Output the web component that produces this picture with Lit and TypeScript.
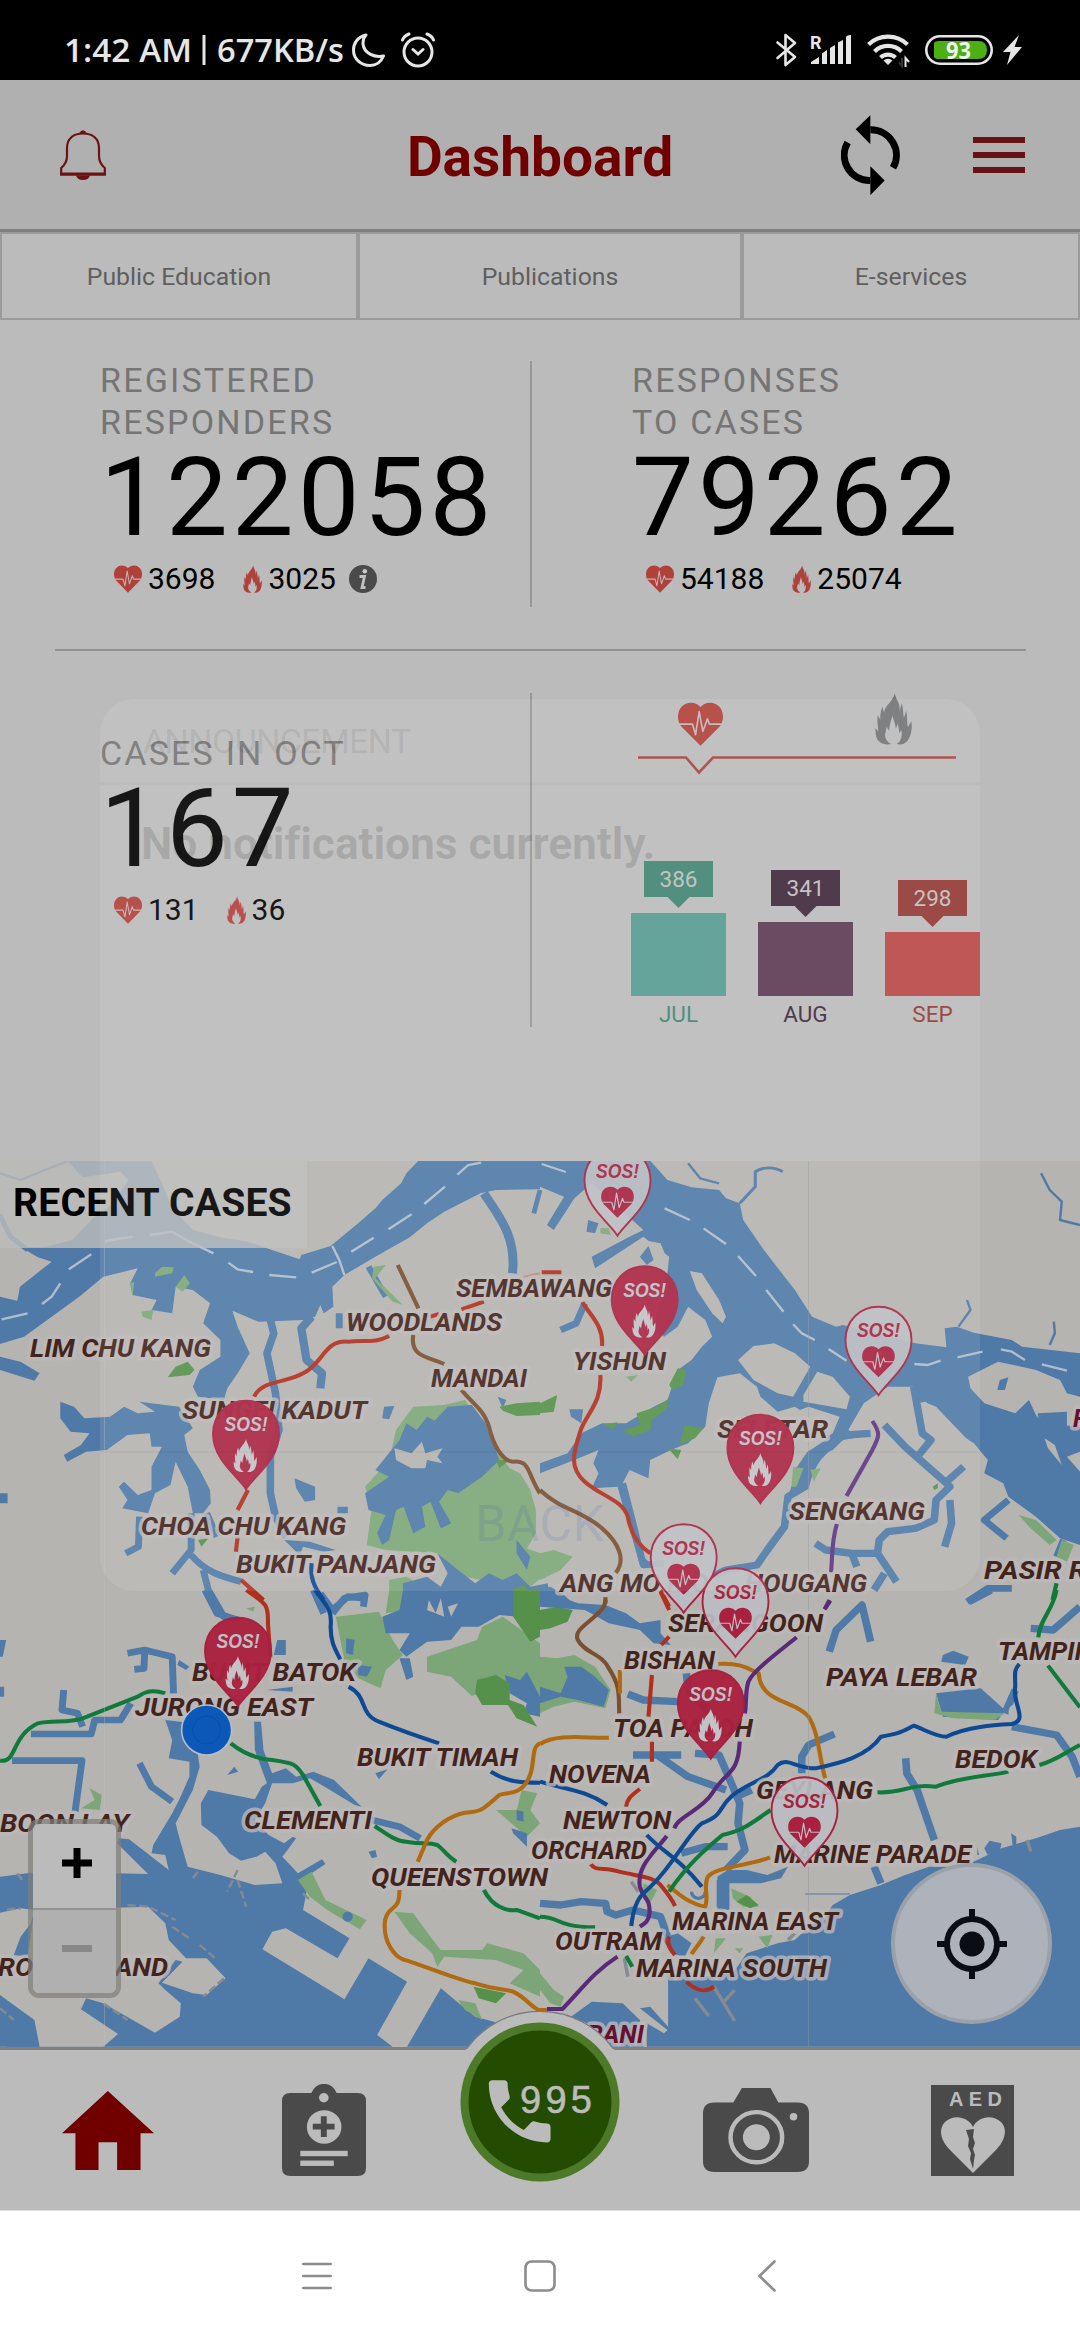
import { LitElement, html, svg, css } from "lit";
import { customElement } from "lit/decorators.js";

/* ---------- shared icon shapes ---------- */

const heartShape = (line: string) => svg`
  <path d="M272 197 L214 139 C200 122 201 93 215 79 C231 62 258 64 272 80 C286 64 313 62 329 79 C343 93 344 122 330 139Z"></path>
  <path d="M202 132 H248 L257 164 L268 94 L279 154 L293 116 L299 132 H342" fill="none" stroke=${line} stroke-width="5" stroke-linejoin="round"></path>`;

const flameShape = svg`
  <path d="M855 40 C857 60 872 66 869 96 L875 70 C880 86 880 104 882 114 L889 92 C893 112 890 126 894 142 L904 124 C908 150 901 174 891 184 C882 194 870 195 860 192 C872 185 879 170 874 150 L868 160 C868 145 864 138 864 130 L858 146 C856 125 850 120 848 106 C843 125 839 135 838 152 L830 140 C830 155 823 160 827 173 C830 182 836 188 844 192 C825 196 812 190 804 180 C797 168 798 155 797 145 L806 154 C803 130 803 122 804 106 L812 120 C811 105 813 93 818 80 L823 98 C826 76 850 64 855 40Z"></path>`;

const heartIcon = (w: number, h: number) => html`
  <svg class="red" width=${w} height=${h} viewBox="204 65 136 133" preserveAspectRatio="none">${heartShape("#c3b4b3")}</svg>`;
const flameIcon = (w: number, h: number, cls = "red") => html`
  <svg class=${cls} width=${w} height=${h} viewBox="796 39 110 156" preserveAspectRatio="none">${flameShape}</svg>`;

/* ---------- map data ---------- */

const WATER = "#4f7aa8";
const LAND = "#b6b4b0";
const GREEN = "#7da678";
const FOREST = "#55914a";

type Place = [string, number, number, number, string?];
const places: Place[] = [
  ["LIM CHU KANG", 30, 211, 1357], ["SEMBAWANG", 456, 612, 1297], ["WOODLANDS", 346, 502, 1331],
  ["MANDAI", 431, 527, 1387], ["SUNGEI KADUT", 182, 367, 1419], ["CHOA CHU KANG", 141, 346, 1535],
  ["BUKIT PANJANG", 236, 436, 1573], ["YISHUN", 573, 666, 1370], ["SELETAR", 717, 828, 1438],
  ["SENGKANG", 789, 925, 1520], ["ANG MO KIO", 560, 709, 1592], ["HOUGANG", 745, 867, 1592],
  ["PASIR RIS", 984, 1112, 1579], ["BUKIT BATOK", 192, 356, 1681], ["JURONG EAST", 135, 313, 1716],
  ["BUKIT TIMAH", 357, 518, 1766], ["CLEMENTI", 244, 372, 1829], ["BOON LAY", 0, 129, 1832],
  ["QUEENSTOWN", 371, 548, 1886], ["JURONG ISLAND", -34, 168, 1976], ["SERANGOON", 668, 823, 1632],
  ["BISHAN", 624, 715, 1669], ["PAYA LEBAR", 826, 977, 1686], ["TAMPINES", 998, 1122, 1660],
  ["TOA PAYOH", 613, 753, 1737], ["NOVENA", 549, 651, 1783], ["GEYLANG", 756, 873, 1799],
  ["BEDOK", 955, 1037, 1768], ["NEWTON", 563, 671, 1829], ["ORCHARD", 531, 647, 1859],
  ["MARINE PARADE", 774, 971, 1863], ["MARINA EAST", 672, 838, 1930], ["OUTRAM", 555, 662, 1950],
  ["MARINA SOUTH", 636, 827, 1977], ["BRANI", 571, 644, 2043, "#65102f"], ["PULAU", 1073, 1150, 1427, "#65102f"],
];

type Pin = ["fire" | "heart", number, number];
const pins: Pin[] = [
  ["heart", 617.5, 1236.5], ["fire", 644.7, 1355.5], ["heart", 878.5, 1396], ["fire", 246, 1490],
  ["fire", 760.4, 1504], ["heart", 683.7, 1613.5], ["heart", 735.5, 1657.5], ["fire", 238, 1707],
  ["fire", 710.8, 1759.5], ["heart", 804.5, 1866.5],
];

const pin = ([kind, x, y]: Pin) => {
  const fire = kind === "fire";
  return svg`
    <g transform="translate(${x} ${y})">
      <path d="M0 -0.8 C-8 -14 -33 -30 -33 -56 C-33 -75 -19 -89.2 0 -89.2 C19 -89.2 33 -75 33 -56 C33 -30 8 -14 0 -0.8Z"
        fill=${fire ? "#a9213f" : "#bbbcc2"} fill-opacity=${fire ? 0.97 : 0.93} stroke="#a9213f" stroke-width="1.9"></path>
      <text x="0" y="-59" text-anchor="middle" class="sos" textLength="43" lengthAdjust="spacingAndGlyphs" fill=${fire ? "#bfbfc4" : "#a9213f"}>SOS!</text>
      ${fire
        ? svg`<g fill="#c3c3c6" transform="translate(-0.8 -34.5) scale(.215) translate(-851 -117)">${flameShape}</g>`
        : svg`<g fill="#a9213f" transform="translate(0 -34.5) scale(.24) translate(-272 -131)">${heartShape("#bbbcc2")}</g>`}
    </g>`;
};

/* Each quadrant of the map is drawn in its own 1568-wide tile grid. */
const northWest = svg`
  <g transform="translate(0 1140) scale(.34439 .33333)">
    <g fill=${WATER}>
      <path d="M0 470 L50 482 58 440 150 365 110 352 60 322 130 322 210 300 270 235 330 190 372 120 350 95 240 112 195 62 H440 L470 130 500 205 560 270 640 292 720 305 790 330 870 358 875 345 960 318 1040 250 1090 205 1110 180 1165 130 1180 100 1215 62 H1568 V148 L1440 150 1395 160 1290 215 1240 250 1190 292 1090 350 1000 405 965 440 968 500 940 520 930 495 915 530 880 540 750 545 675 512 690 560 725 640 690 700 660 745 650 780 575 770 560 740 580 690 640 650 640 600 590 550 610 490 560 450 510 440 500 520 440 510 455 480 385 465 378 430 400 385 300 410 230 470 150 530 70 590 0 612Z"></path>
      <path d="M0 650 L60 665 115 700 100 722 0 690Z"></path>
      <path d="M175 785 L215 800 245 835 320 830 360 800 400 820 450 815 405 785 520 800 560 865 535 885 545 935 580 990 610 1050 612 1090 590 1120 560 1120 545 1040 510 965 495 1035 450 1060 430 1120 355 1105 370 1080 345 1040 360 1025 400 1065 440 1050 440 980 470 920 440 920 435 880 370 885 310 930 250 935 195 965 185 945 235 915 260 880 205 875 175 835Z"></path>
      <path d="M855 1015 L915 1040 915 1080 885 1085 860 1045Z M1115 800 L1145 798 1130 838 1110 835Z M975 520 h20 v45 h-20Z M1445 770 l25 10 l-10 25z M0 1060 h22 v30 h-22z"></path>
      <path d="M825 1200 L900 1205 975 1230 940 1235 880 1220 870 1245Z"></path>
    </g>
    <g fill="none" stroke=${WATER} stroke-width="20" stroke-linejoin="round">
      <path d="M0 225 L30 290 80 330" stroke-width="14"></path>
      <path d="M785 540 L795 580 775 640 800 760 810 870 785 950 785 1060 800 1130 830 1190" stroke-width="22"></path>
      <path d="M905 530 L875 565 890 660 935 700 930 745" stroke-width="24"></path>
      <path d="M1070 380 L1120 470" stroke-width="18"></path>
      <path d="M1405 160 C1450 230 1500 290 1488 400" stroke-width="26"></path>
      <path d="M405 1130 L402 1220 365 1240 M555 1120 L555 1230 500 1300 M555 1245 C600 1300 650 1310 700 1325 M590 1290 L605 1350 650 1430 690 1440"></path>
      <path d="M600 1120 L630 1190 M980 1110 L1010 1110 M930 1360 L965 1410 L1010 1370 L1060 1375"></path>
      <path d="M1568 150 L1550 220" stroke-width="14"></path>
    </g>
    <path d="M0 100 L60 120 130 90 195 64" fill="none" stroke=${WATER} stroke-width="7"></path>
    <g fill=${GREEN}>
      <path d="M450 400 L470 380 505 382 500 400 450 410Z M510 440 L535 405 552 430 530 455Z M410 515 L445 510 440 540 415 530Z M378 430 L390 425 385 470Z"></path>
      <path d="M1200 800 L1290 795 1350 780 1390 840 1440 930 1480 985 1510 1000 1540 1050 1556 1110 1556 1180 1530 1225 1568 1240 1590 1300 1540 1340 1440 1330 1350 1310 1270 1240 1120 1230 1065 1215 1080 1100 1060 1040 1130 960 1150 870Z"></path>
      <path d="M1130 1320 L1180 1310 1250 1350 1250 1380 1130 1380Z M1085 380 l35 -5 -30 40 80 80 -30 -10 -60 -70z"></path>
    </g>
    <g fill=${WATER}>
      <path d="M1180 850 L1210 870 1240 830 1262 842 1300 800 1370 795 1410 850 1450 960 1400 1010 1330 1060 1300 1050 1275 1085 1310 1150 1280 1165 1250 1085 1225 1100 1235 1160 1200 1180 1172 1100 1150 1110 1130 1200 1110 1215 1095 1180 1120 1125 1070 1110 1060 1060 1130 1010 1090 990 1160 900Z"></path>
      <path d="M1170 1330 L1240 1310 1280 1340 1300 1300 1270 1240 1330 1290 1380 1330 1420 1300 1460 1320 1500 1300 1540 1340 1590 1330 1600 1380 1170 1380Z M1500 1200 L1540 1250 1530 1290 1500 1240Z"></path>
    </g>
    <g fill=${LAND}>
      <path d="M1145 925 L1195 940 1225 905 1235 940 1285 925 1270 950 1285 970 1240 960 1235 985 1195 985 1150 960Z"></path>
    </g>
    <g fill=${FOREST}>
      <path d="M487 712 L510 680 545 665 565 690 550 705Z M575 1200 l30 -5 -20 25z M1450 800 L1500 790 1568 785 V825 L1500 828 1460 812Z M1440 960 L1480 960 1450 985Z M1485 1350 L1520 1335 1568 1380 H1485Z"></path>
    </g>
    <g fill="none" stroke="#aebccb" stroke-width="7">
      <path d="M5 538 L80 520 M122 492 L150 470 175 430 M200 388 L265 343 M305 303 L385 290 M435 285 L500 275 550 305 620 340 M663 368 L690 388 735 396 M782 405 L860 412 M905 398 L978 366 M1020 335 L1085 293 M1128 268 L1195 223 M1232 192 L1292 140 M1328 104 L1360 75 1397 68 M965 318 L985 360 1000 405"></path>
    </g>
    <g fill="none" stroke-width="12" stroke-linejoin="round">
      <path d="M738 770 C760 720 830 730 880 700 C940 670 940 600 1010 605 C1060 600 1090 610 1130 588 M1250 530 L1275 522 M1340 508 L1405 485" stroke="#b03020"></path>
      <path d="M720 1050 L690 1110 M690 1190 L685 1235 M700 1320 L765 1380" stroke="#b03020"></path>
      <path d="M1520 410 L1568 400" stroke="#c08a85" stroke-width="6"></path>
      <path d="M1155 375 L1215 505 M1200 585 C1190 650 1240 650 1290 672 M1340 750 C1380 800 1410 810 1425 880 C1440 930 1465 965 1490 965 C1540 960 1530 1000 1568 1060" stroke="#7a5030"></path>
      <path d="M905 1270 C900 1310 910 1340 940 1380" stroke="#0e4a94"></path>
    </g>
  </g>`;

const northEast = svg`
  <g transform="translate(540 1140) scale(.34439 .33333)">
    <g fill=${WATER}>
      <path d="M0 62 H320 L370 120 440 142 520 150 540 175 580 190 590 240 650 330 740 450 790 530 860 560 880 555 1090 610 1180 622 1175 565 1210 560 1260 578 1370 600 1400 620 1568 640 V1215 L1510 1195 1440 1130 1360 1070 1345 1030 1290 1000 1300 960 1260 910 1200 870 1120 785 1095 790 1085 740 1010 740 940 790 895 870 935 890 880 900 850 930 800 950 770 1040 720 1070 740 1010 740 960 830 900 860 850 840 830 770 820 740 800 690 815 640 770 630 740 580 700 515 712 490 790 480 860 430 910 380 930 320 960 315 1015 260 990 240 1030 290 1240 320 1270 290 1275 225 1040 150 1045 170 1000 155 970 170 930 100 960 0 1000 V970 L80 940 120 880 180 850 250 850 330 800 370 780 400 690 440 660 470 620 500 590 480 540 430 500 400 560 360 590 330 560 370 400 375 350 300 290 160 385 150 350 260 290 300 270 150 130 100 175 40 270 20 255 70 170 0 140Z"></path>
      <path d="M85 808 L125 808 120 850 90 830Z M140 240 l30 10 -10 30 -25 -5z M0 1350 L30 1340 70 1365 90 1385 H0Z"></path>
    </g>
    <g fill=${LAND}>
      <path d="M575 660 L620 618 680 610 740 640 785 680 735 770 690 760 620 720Z"></path>
      <path d="M805 695 L850 710 900 770 890 808 765 785 765 765Z"></path>
      <path d="M435 393 L470 400 520 480 540 530 530 550 500 520 455 450Z"></path>
      <path d="M1115 785 L1150 800 1270 930 1300 960 1295 975 1220 930 1150 870Z"></path>
      <path d="M1120 905 L1165 930 1155 965 1105 945Z M1180 950 L1225 985 1195 1015 1165 990Z"></path>
      <path d="M1243 710 L1330 665 1440 690 1510 720 1530 760 1568 770 V860 L1460 850 1440 825 1420 780 1380 820 1290 790 1250 745Z"></path>
      <path d="M370 360 L350 310 300 300 330 330 345 375Z M1465 895 l30 20 20 60 -40 -50z M1530 950 l38 -15 v60z"></path>
      <path d="M700 830 L780 800 870 830 850 880 780 930 740 990 720 1060 600 1200 450 1200 320 1010 330 960 430 920 490 850Z"></path>
    </g>
    <path d="M1335 720 L1360 712 1350 750 1328 750Z M1445 820 L1530 815 1530 860 1450 850Z M290 350 L315 318 330 360 310 375Z" fill=${WATER}></path>
    <g fill="none" stroke=${WATER} stroke-width="20" stroke-linejoin="round">
      <path d="M580 190 L625 140 625 95 C650 80 680 80 705 95" stroke-width="9"></path>
      <path d="M1455 100 L1480 150 1515 185 1510 240 1568 255 M1215 560 L1250 510 1240 480 M1480 615 L1495 580 1492 545 M430 70 L465 115 520 130" stroke-width="7"></path>
      <path d="M130 490 L105 550 60 570"></path>
      <path d="M860 900 C830 930 790 950 770 1040 L720 1070 710 1160 660 1230 630 1275 540 1290 500 1310" stroke-width="22"></path>
      <path d="M890 885 L960 880 M1000 855 L1060 920 1170 1020 1190 1040 1150 1080 1145 1140 1090 1165 1010 1175 985 1200 980 1240 905 1240 830 1230 800 1210 M1085 740 L1110 880 1135 900 1100 945 M1230 980 L1170 1035 M1190 1080 L1195 1150 1175 1220 M905 1240 L920 1280 M980 1240 L1035 1325 M1000 1300 L970 1350" stroke-width="22"></path>
      <path d="M1360 1080 L1290 1140 1355 1195 M1520 1200 L1500 1250 M1240 1385 L1300 1345 1370 1345" stroke-width="20"></path>
      <path d="M240 1030 L270 1150 300 1275 360 1270"></path>
    </g>
    <g fill=${GREEN}>
      <path d="M1390 1125 L1440 1140 1500 1200 1480 1215 1420 1160Z M1515 1200 L1550 1215 1530 1265 1500 1250Z M735 980 L765 985 745 1040 730 1040Z M785 990 l30 -5 -20 40z M0 1240 L40 1230 95 1250 60 1290 20 1310 0 1320Z M250 710 l35 -5 -20 20z M175 265 l25 0 5 20 -30 -5z"></path>
    </g>
    <g fill=${FOREST}>
      <path d="M400 685 L425 690 415 735 385 750 375 735Z M240 870 L290 855 280 820 340 800 375 775 365 810 325 840 320 870 270 890Z M405 915 L420 855 475 865 450 895Z M372 925 L410 930 400 958Z M0 790 L50 765 40 815 0 820Z M1140 1040 l15 -10 0 15 -10 5z M180 855 l45 -8 -10 20z"></path>
    </g>
    <g fill="none" stroke="#aebccb" stroke-width="7">
      <path d="M5 72 L75 96 M362 205 L435 240 M475 265 L540 312 M575 348 L627 408 M657 450 L707 515 M735 553 L760 580 798 600 M838 627 L890 662 M1087 672 L1125 675 1163 662 M1212 652 L1285 635 M1338 628 L1370 635 1408 660 M1457 673 L1530 692"></path>
    </g>
    <g fill="none" stroke-width="12" stroke-linejoin="round">
      <path d="M5 397 L62 397 M123 487 C150 530 185 560 180 618 M175 705 C180 780 145 810 120 865 C100 930 80 980 130 1025 C180 1070 240 1080 255 1130 C265 1190 290 1220 320 1240 M350 1350 L375 1400" stroke="#b03020"></path>
      <path d="M0 1050 C60 1110 120 1110 180 1165 C230 1210 250 1260 220 1298 M190 1372 L190 1390" stroke="#7a5030"></path>
      <path d="M965 843 C990 880 985 890 965 930 L890 1068 M862 1152 C845 1210 850 1250 845 1297 M840 1380 L828 1405" stroke="#5f3580"></path>
      <path d="M1500 1330 L1488 1380" stroke="#107a3c"></path>
    </g>
  </g>`;

const southWest = svg`
  <g transform="translate(0 1590) scale(.34439 .33333)">
    <g fill=${WATER}>
      <path d="M0 860 L90 848 330 850 430 852 340 760 345 745 375 748 490 840 480 795 440 790 445 765 500 670 520 630 550 560 550 515 490 505 500 450 480 390 560 400 580 530 560 600 510 700 520 740 545 830 640 855 740 885 820 880 800 820 770 785 745 800 700 812 665 790 630 740 585 705 583 640 605 600 740 628 760 590 775 580 740 480 738 395 758 395 765 480 790 550 830 535 860 560 910 545 970 570 1050 650 1030 645 950 595 900 565 850 580 790 580 770 640 740 690 780 735 825 760 850 740 860 745 820 800 865 850 935 808 945 822 875 870 890 905 880 960 1015 1045 980 1105 830 1015 790 1025 762 1078 1000 1228 1070 1105 1182 1175 1095 1335 1140 1370 H0Z"></path>
      <path d="M1182 1370 L1280 1195 1380 1280 1450 1300 1568 1310 V1370Z"></path>
      <path d="M0 150 h18 l-10 50 h-8z M0 290 h12 v30 h-12z M805 150 h25 v45 h-35z M1005 150 h25 v45 h-30z M1045 220 l40 10 -15 30 -30 -10z M1160 205 l30 0 10 55 -20 10z M520 210 l30 20 -10 10 -25 -15z M660 555 l20 -25 12 15z M1090 550 l35 -12 -25 30z M1070 785 l20 -5 5 20 -15 5z M775 300 l75 -10 0 15z"></path>
    </g>
    <g fill="none" stroke=${WATER} stroke-width="20" stroke-linejoin="round">
      <path d="M595 0 L630 70 690 90 M370 190 L420 180 500 200 504 310 M420 190 L418 235 390 238 M185 300 L180 360 225 370 240 410 M90 432 L265 432 275 390 350 390 380 340 M35 512 H238 L218 665 M405 520 L440 590 500 635 M1080 690 L1160 710 1220 745 M965 70 L1000 25 1060 15 1055 50 M910 0 L940 70"></path>
    </g>
    <g fill=${LAND}>
      <path d="M0 968 L60 955 100 960 90 1000 60 1040 40 1095 80 1100 100 960 430 950 480 1000 490 1050 540 1105 600 1105 655 1165 600 1215 560 1210 470 1178 530 1115 510 1110 460 1180 480 1200 525 1240 522 1280 450 1328 300 1240 250 1225 235 1258 343 1332 300 1370 H115 L100 1290 0 1215Z"></path>
    </g>
    <path d="M0 1235 L60 1285 100 1320 112 1370 H20 L0 1310Z" fill=${WATER}></path>
    <g fill=${GREEN}>
      <path d="M975 80 L1100 65 1140 150 1170 195 1120 240 1105 295 1040 265 1000 210Z"></path>
      <path d="M1130 0 H1210 L1190 60 1120 70Z M1240 200 L1385 150 1400 110 1460 80 1568 160 V320 L1480 280 1370 318 1310 260 1240 245Z"></path>
      <path d="M260 595 L295 615 290 660 235 655 275 630Z M865 870 L905 845 945 930 1065 990 1045 1018 950 960 900 920Z M1145 965 L1200 970 1250 1040 1280 1080 1400 1080 1415 1060 1520 1090 1568 1140 V1220 L1480 1180 1520 1140 1440 1110 1290 1100 1270 1130 1255 1090 1190 1030Z M1515 600 L1560 610 1540 660 1568 700 1530 740 1440 660 1500 660Z M1330 1230 L1380 1240 1400 1290 1350 1260Z M715 55 l25 -5 -5 15z"></path>
    </g>
    <g fill=${WATER}>
      <path d="M1170 0 H1490 L1500 80 1450 75 1390 110 1340 110 1310 150 1240 155 1180 200 1160 180 1190 130 1120 130 1110 80 1160 60Z"></path>
      <path d="M1465 255 L1510 270 1530 245 1568 320 V380 L1520 370 1530 340 1480 310Z M1500 660 l20 5 0 30 -20 -5z M1485 715 l45 15 0 40 -40 -40z M1010 965 a15 15 0 1 1 -1 0z M1005 145 l25 5 -5 45 -20 -5z M1040 225 l40 5 -15 30 -25 -5z"></path>
    </g>
    <path d="M1245 30 L1265 70 1280 25 1290 80 1240 60Z M1300 50 l30 -10 -20 40z" fill=${LAND}></path>
    <path d="M1490 0 H1568 V140 L1540 155 1490 80Z M1385 270 L1440 255 1480 280 1480 330 1520 345 1560 410 1500 385 1475 345 1400 345 1380 310Z M1375 1190 L1470 1210 1440 1240 1390 1225Z" fill=${FOREST}></path>
    <g fill="none" stroke="#868b91" stroke-width="7" stroke-dasharray="24 10">
      <path d="M50 850 L65 870 M575 845 L555 870 M690 840 L660 905 M690 870 L715 950 M880 910 L900 930 M20 958 L60 955 M370 945 L430 950 510 990 M500 1010 L550 1045 M580 1065 L630 1110 M650 1165 L590 1220 M300 1240 L370 1290 M0 1255 L40 1290"></path>
    </g>
    <g fill="none" stroke-width="12" stroke-linejoin="round">
      <path d="M715 0 C770 40 780 40 778 100 L785 200" stroke="#b03020"></path>
      <path d="M915 0 C950 50 965 60 960 110 C960 160 975 180 988 208 M1012 290 C1070 320 1040 370 1100 395 C1160 420 1200 435 1275 460 M1425 545 C1470 575 1510 578 1568 578" stroke="#0e4a94"></path>
      <path d="M0 512 C50 520 30 440 110 400 C150 390 200 400 240 385 L400 320 C430 300 450 300 480 310 M670 460 C720 500 760 508 790 510 C860 520 860 525 880 555 L930 648 M1088 708 C1120 730 1150 755 1180 755 C1230 765 1240 755 1270 765 C1290 780 1300 800 1325 815 M1405 900 C1430 950 1470 965 1500 960 L1568 985" stroke="#107a3c"></path>
      <path d="M1568 460 C1540 470 1555 530 1535 565 C1510 620 1470 605 1450 615 C1400 660 1400 665 1350 668 C1310 675 1260 710 1240 750 L1213 815 M1160 900 C1160 970 1130 940 1118 990 C1110 1060 1150 1100 1170 1108 C1240 1130 1330 1170 1380 1180 C1440 1200 1460 1195 1490 1205 C1530 1225 1540 1250 1568 1262" stroke="#b06a10"></path>
    </g>
  </g>`;

const southEast = svg`
  <g transform="translate(540 1590) scale(.34439 .33333)">
    <g fill=${WATER}>
      <path d="M1568 710 L1510 720 1440 745 1390 760 1340 775 1270 810 1220 830 1130 830 1060 855 990 885 900 915 850 945 830 975 770 1020 740 1050 690 1060 600 1090 560 1150 440 1165 400 1130 372 1160 V1310 L320 1250 290 1255 370 1320 360 1330 310 1300 V1370 H1568Z"></path>
      <path d="M90 1280 L150 1235 240 1240 290 1290 300 1370 H150Z"></path>
      <path d="M355 1045 L400 1030 440 1060 420 1100 380 1090Z"></path>
      <path d="M1150 310 L1280 295 1350 360 1330 390 1170 380Z M1170 195 L1200 182 1245 200 1235 225 1165 215Z M1270 770 l5 25 -5 0z M1290 775 L1305 752 1340 760 1335 785 1300 795Z M1368 730 l15 10 0 30 -10 0z"></path>
      <path d="M515 860 L545 840 600 840 660 855 720 830 700 865 640 880 550 880 550 960 515 960Z"></path>
    </g>
    <g fill=${GREEN}>
      <path d="M0 200 L50 205 100 195 160 230 205 300 190 355 100 335 40 350 0 370Z M1150 310 L1145 370 1200 385 1320 390 1350 370 1165 365Z M555 895 L610 920 635 950 590 950 560 925Z M0 1150 L40 1200 70 1220 60 1250 30 1240 0 1200Z M510 1045 L540 1045 505 1090Z M635 1040 L675 1035 660 1075Z M565 1075 l25 0 -10 15z M300 880 L340 900 320 940 300 920Z"></path>
    </g>
    <path d="M0 60 L50 50 95 60 80 95 30 115 0 120Z M570 935 L600 915 635 945 610 955Z" fill=${FOREST}></path>
    <path d="M0 20 L60 20 110 40 190 45 250 70 290 100 350 90 350 130 380 165 330 160 290 120 200 100 130 60 0 50Z M0 290 L60 310 80 260 70 230 120 230 160 260 200 300 185 350 110 330 60 320 0 340Z" fill=${WATER}></path>
    <g fill="none" stroke=${WATER} stroke-width="22" stroke-linejoin="round">
      <path d="M255 312 L300 330 400 335 M425 250 L430 300 560 440 M270 495 H410 M340 495 L430 560 540 600 M450 490 L520 495 560 590 580 640 575 700 595 780 540 840 M570 620 L615 600 M545 770 L480 770 410 790 M840 185 L860 120 935 45 960 155 M855 432 L780 465 760 500 760 550 M1062 505 L1065 550 1095 600 1145 750 M970 830 L990 880 M1370 410 L1500 435 1545 500 1568 560 M1380 300 L1350 370 M1245 35 L1310 0 M1425 115 L1490 120 1568 50 M0 940 L60 945 120 935 190 940 195 965 220 975 270 960 350 980 370 1040"></path>
      <path d="M530 870 V950" stroke-width="34"></path>
      <path d="M770 912 H900" stroke-width="3"></path>
      <path d="M440 905 a18 18 0 1 0 40 0" stroke-width="10"></path>
    </g>
    <path d="M1375 345 a15 22 0 1 0 1 0z" fill=${LAND}></path>
    <g fill="none" stroke="#868b91" stroke-width="10">
      <path d="M450 1225 L490 1278 M505 1190 L565 1293 M530 1240 L565 1200 M265 875 L285 905 M720 1050 L740 1030 M1415 750 L1425 785 M245 1105 L255 1160"></path>
    </g>
    <g fill="none" stroke-width="12" stroke-linejoin="round">
      <path d="M190 30 C190 80 90 110 110 150 C130 190 180 190 200 235 C235 290 228 320 230 370" stroke="#7a5030"></path>
      <path d="M232 240 V310" stroke="#b06a10"></path>
      <path d="M0 462 C50 430 130 445 200 443 M518 222 C590 218 610 240 635 250 C640 340 740 330 780 380 C810 430 810 500 828 565 M668 802 C600 830 500 830 485 865 C475 900 490 920 480 950 C430 940 400 910 370 885 M475 1040 C465 1060 450 1075 440 1092 M0 1260 H20" stroke="#b06a10"></path>
      <path d="M350 5 L375 60 M375 140 L352 165 M325 255 L315 380 M325 455 L325 515 M290 597 C260 620 252 630 250 650 M148 823 C160 845 190 830 230 845 C290 860 330 860 350 885 C370 910 385 930 392 948 M375 1040 C365 1060 380 1080 392 1095 M425 1175 C450 1200 480 1210 505 1190" stroke="#b03020"></path>
      <path d="M843 32 L826 58 M745 142 C700 180 620 240 605 275 C595 310 600 340 595 370 M580 455 C575 560 540 540 500 610 C470 660 400 680 390 715 M368 738 C330 790 280 830 290 890 C300 930 320 920 318 970 C315 995 305 1000 290 1010 M225 1100 C150 1150 120 1200 65 1257 H20" stroke="#5a2a78"></path>
      <path d="M0 575 C80 600 130 600 195 645 M310 735 C360 790 400 800 470 890 M265 1008 C270 960 280 930 300 910 C380 840 430 730 470 700 C540 670 510 660 560 615 C620 570 660 570 690 525 C720 500 740 535 800 535 C870 520 950 500 990 440 C1050 430 1060 420 1085 407 C1120 420 1150 440 1180 440 C1240 410 1320 405 1370 402 C1420 390 1370 340 1380 290 C1380 250 1375 240 1392 222" stroke="#0e4a94"></path>
      <path d="M1500 0 C1490 60 1450 90 1447 142 M1475 227 L1568 352 M980 607 C1060 610 1070 580 1150 590 C1220 560 1300 560 1360 545 M1450 525 C1500 510 1520 490 1568 465 M670 660 C600 710 590 720 530 735 C490 770 430 820 375 905 M0 980 C60 980 40 1010 160 1012 M250 1098 L268 1130" stroke="#107a3c"></path>
    </g>
  </g>`;

@customElement("case-map")
class CaseMap extends LitElement {
  static styles = css`
    :host { display: block; position: relative; width: 1080px; height: 886px; overflow: hidden; font-family: Roboto, sans-serif; }
    .canvas { display: block; }
    .place { font: italic 700 25px Roboto, "Liberation Sans", sans-serif; }
    .sos { font: italic 700 20px "Liberation Sans", sans-serif; }
    .title {
      position: absolute; left: 0; top: 0; box-sizing: border-box; width: 307px; height: 87px; padding: 0 0 3px 13px;
      display: flex; align-items: center; background: rgba(187, 187, 187, .82);
      color: #000; font-size: 39px; font-weight: 700; letter-spacing: .25px; white-space: nowrap;
    }
    .zoom {
      position: absolute; left: 28px; top: 658px; width: 83px; border: 5px solid rgba(128, 128, 122, .72);
      border-radius: 11px; overflow: hidden; background-clip: padding-box;
    }
    .step { display: flex; align-items: center; justify-content: center; height: 84px; background: #bbb; color: #000; }
    .step svg { overflow: visible; }
    .step.off { background: #b0b0b0; color: #888; border-top: 2px solid #949494; height: 83px; }
    .locate {
      position: absolute; left: 891px; top: 702px; width: 153px; height: 153px; border: 4px solid #9ba1a8;
      border-radius: 50%; background: #adb2bb; display: flex; align-items: center; justify-content: center;
    }
  `;
  render() {
    return html`
      <svg class="canvas" width="1080" height="886" viewBox="0 1161 1080 886">
        <rect x="0" y="1161" width="1080" height="886" fill=${LAND}></rect>
        ${northWest}${northEast}${southWest}${southEast}
        <g fill="#c4c2c0" opacity=".3"><rect x="104" y="1161" width="1" height="886"></rect></g>
        <g fill="#8f959b" opacity=".45"><rect x="808" y="1161" width="1" height="886"></rect></g>
        <g class="place">
          ${places.map(([t, a, b, y, c]) => svg`<text x=${a} y=${y} textLength=${b - a} lengthAdjust="spacingAndGlyphs"
            fill=${c ?? "#43241c"} stroke="#bdb9ba" stroke-opacity=".8" stroke-width="7" stroke-linejoin="round" paint-order="stroke">${t}</text>`)}
        </g>
        ${pins.map(pin)}
        <circle cx="206.6" cy="1730" r="25" fill="#0b58b8" stroke="#b4bcc8" stroke-width="1.6"></circle>
        <circle cx="206.6" cy="1730" r="14" fill="none" stroke="#0a4ea6" stroke-width="1"></circle>
      </svg>
      <div class="title">RECENT CASES</div>
      <div class="zoom">
        <div class="step"><svg width="30" height="30" viewBox="0 0 30 30"><path d="M15 0V30M0 15H30" transform="translate(2 -3)" stroke="#000" stroke-width="7"></path></svg></div>
        <div class="step off"><svg width="36" height="30" viewBox="0 0 36 30"><path d="M5 11.500H35" stroke="#888" stroke-width="7"></path></svg></div>
      </div>
      <div class="locate">
        <svg width="70" height="70" viewBox="0 0 70 70" fill="none" stroke="#0a0d14" stroke-width="6">
          <circle cx="35" cy="35" r="25"></circle><path d="M35 0V10M35 60V70M0 35H10M60 35H70"></path>
          <circle cx="35" cy="35" r="12.5" fill="#0a0d14" stroke="none"></circle>
        </svg>
      </div>`;
  }
}

@customElement("status-bar")
class StatusBar extends LitElement {
  static styles = css`
    :host { display: flex; align-items: center; height: 80px; padding: 20px 58px 0 64px; box-sizing: border-box; background: #000; color: #e6e6e6; font-family: "Open Sans", "Noto Sans", sans-serif; }
    .clock { font-size: 33px; font-weight: 600; line-height: 36px; overflow: visible; }
    .left { display: flex; align-items: center; gap: 16px; flex: 1; }
    .right { display: flex; align-items: center; }
    .right svg { display: block; overflow: visible; }
    .moon { margin-left: -16px; }
    .bt { margin-right: 14px; } .sig { margin-right: 16px; } .wifi { margin-right: 16px; } .bat { margin-right: 10px; }
    .pct { font: 700 24px "Open Sans", sans-serif; }
    .net { font: 700 18px Roboto, sans-serif; }
  `;
  render() {
    return html`
      <div class="left">
        <svg class="clock" width="288" height="36" viewBox="0 0 288 36" fill="#e6e6e6">
          <text x="0" y="30" textLength="128" lengthAdjust="spacingAndGlyphs">1:42 AM</text>
          <rect x="138.500" y="3" width="3" height="30"></rect>
          <text x="153" y="30" textLength="127" lengthAdjust="spacingAndGlyphs">677KB/s</text>
        </svg>
        <svg class="moon" width="33" height="34" viewBox="0 0 33 34" fill="none" stroke="#e6e6e6" stroke-width="3" stroke-linejoin="round"><path d="M14 2 C5 4 1.500 11 1.500 17 C1.500 26 9 32.500 18 32.500 C24 32.500 29 29 31.500 23 C22 25 12 20 11 11 C10.800 7 12 4 14 2Z"></path></svg>
        <svg width="34" height="36" viewBox="0 0 34 36" fill="none" stroke="#e6e6e6" stroke-width="3" stroke-linecap="round"><circle cx="17" cy="20" r="14"></circle><path d="M1.500 8 Q3 4 8 2 M32.500 8 Q31 4 26 2 M12 17.500 L17 22 L22 17.500"></path></svg>
      </div>
      <div class="right">
        <svg class="bt" width="21" height="34" viewBox="0 0 21 34" fill="none" stroke="#e6e6e6" stroke-width="2.600" stroke-linejoin="round" stroke-linecap="round"><path d="M1.500 9.500 L19 24 L9.500 32 V2 L19 10 L1.500 25"></path></svg>
        <svg class="sig" width="40" height="30" viewBox="0 0 40 30" fill="#e6e6e6"><text class="net" x="-1" y="13.500">R</text><path d="M0 29 V27 L8 22 V29Z M11 29 V18.500 L16 15 V29Z M19 29 V13 L24 10 V29Z M27 29 V7.500 L32 5 V29Z M35 29 V2.500 Q35 0 40 0 V29Z"></path></svg>
        <svg class="wifi" width="42" height="34" viewBox="0 0 42 34" fill="none" stroke="#e6e6e6" stroke-width="4.200"><path d="M1.500 11.500 A28 28 0 0 1 40.500 11.500 M7.500 18.500 A19 19 0 0 1 34.500 18.500 M13.500 24.500 A11 11 0 0 1 28.500 24.500"></path><path d="M16.500 27.500 Q21 24 25.500 27.500 L21 32Z" fill="#e6e6e6" stroke="none"></path><path d="M38.500 34 V25 L42 29" stroke-width="2"></path><path d="M35 25 V33 L32 29.500" stroke="#333" stroke-width="2"></path></svg>
        <svg class="bat" width="68" height="30" viewBox="0 0 68 30"><rect x="1.300" y="1.300" width="65.400" height="27.400" rx="13.700" fill="none" stroke="#e6e6e6" stroke-width="2.600"></rect><path d="M9 8 Q10 6 14 6 H53 Q62 6 62 15 Q62 24 53 24 H14 Q10 24 9 22Z" fill="#4caf14"></path><text class="pct" x="33.500" y="23.500" text-anchor="middle" fill="#f2f2f2" textLength="25" lengthAdjust="spacingAndGlyphs">93</text></svg>
        <svg width="19" height="30" viewBox="0 0 19 30" fill="#e6e6e6"><path d="M16 0 L0 17 H7.500 L4 30 L19 12 H11.500Z"></path></svg>
      </div>`;
  }
}

@customElement("app-root")
class AppRoot extends LitElement {
  static styles = css`
    :host { display: block; position: relative; width: 1080px; height: 2340px; overflow: hidden; background: #bbb; font-family: Roboto, "Noto Sans", sans-serif; }
    svg { display: block; flex: none; }
    .red { fill: #b0403a; }
    .gray { fill: #727475; }
    .header { display: grid; grid-template-columns: 1fr auto 1fr; align-items: center; height: 149px; background: #b0b0b0; border-bottom: 3px solid #7f7f7f; }
    .bell { margin-left: 60px; }
    .brand { font-size: 55px; font-weight: 700; color: #700000; line-height: 60px; padding-top: 5px; width: 268px; display: flex; justify-content: center; white-space: nowrap; }
    .actions { display: flex; align-items: center; justify-content: flex-end; gap: 73px; padding-right: 55px; }
    .tabs { display: grid; grid-template-columns: 358px 384px 338px; height: 88px; }
    .tab { border: 2px solid #9b9b9b; display: flex; align-items: center; justify-content: center; font-size: 24.8px; color: #5f5f5f; }
    .row { display: grid; grid-template-columns: 530px 2px 1fr; }
    .first { height: 329px; }
    .second { height: 510px; }
    .rule { height: 2px; margin: 0 54px 0 55px; background: #929292; }
    .bar { background: #979797; }
    .first .bar { margin: 41px 0 42px; }
    .second .bar { margin: 42px 0 134px; }
    .stat { padding-left: 100px; }
    .first .stat { padding-top: 39px; }
    .second .stat { padding-top: 81px; }
    .label { font-size: 34px; line-height: 42px; letter-spacing: 2.2px; color: #757575; white-space: nowrap; }
    .big { font-size: 110px; line-height: 110px; letter-spacing: 4.1px; color: #000; height: 120px; }
    .split { display: flex; align-items: center; font-size: 30px; line-height: 36px; color: #000; padding-left: 14px; margin-top: -2px; }
    .split span { margin-left: 6px; }
    .split .fl { margin-left: 28px; }
    .info { margin-left: 13px; }
    .chart { padding: 42px 100px 0 99px; }
    .modes { display: flex; justify-content: space-between; align-items: flex-start; height: 63px; padding: 0 68px 0 47px; }
    .modes .red { margin-top: 9px; }
    .bars { display: flex; justify-content: space-between; align-items: flex-end; height: 220px; }
    .names { display: flex; justify-content: space-between; padding-top: 1px; }
    .col { width: 95px; display: flex; flex-direction: column; align-items: center; }
    .tip { width: 69px; height: 36px; display: flex; align-items: center; justify-content: center; font-size: 22.5px; line-height: 30px; color: #bfbfbf; }
    .arrow { width: 22px; height: 11px; clip-path: polygon(0 0, 100% 0, 50% 100%); margin-bottom: 5px; }
    .block { width: 95px; }
    .month { font-size: 22.5px; line-height: 34px; }
    .jul .tip, .jul .arrow { background: #428472; } .jul .block { background: #569b90; } .jul .month { color: #428472; }
    .aug .tip, .aug .arrow { background: #3e283b; } .aug .block { background: #5c3a52; } .aug .month { color: #3e283b; }
    .sep .tip, .sep .arrow { background: #933934; } .sep .block { background: #b84746; } .sep .month { color: #933934; }
    .nav { position: relative; display: grid; grid-template-columns: repeat(5, 216px); align-items: center; justify-items: center; height: 160px; border-top: 3px solid #7f7f7f; background: #bbb; }
    .call { position: absolute; left: 449px; top: -39px; }
    .digits { font: 38px "Liberation Sans", sans-serif; }
    .aed { font: 700 20px "Liberation Sans", sans-serif; }
    .system { display: flex; align-items: center; height: 129px; background: #fff; border-top: 1px solid #dedede; padding-left: 302px; }
    .home { margin: 0 202px 0 192px; }
    .sheet { position: absolute; left: 100px; top: 699px; width: 880px; height: 892px; border-radius: 34px; background: rgba(255, 255, 255, .09); display: flex; flex-direction: column; }
    .head { border-bottom: 3px solid rgba(0, 0, 0, .025); padding-left: 43px; box-sizing: border-box; height: 86px; font-size: 34px; line-height: 84px; letter-spacing: -.6px; color: rgba(0, 0, 0, .085); }
    .note { flex: 1; padding: 32px 0 0 41px; font-size: 44.4px; line-height: 54px; font-weight: 700; color: rgba(0, 0, 0, .125); white-space: nowrap; letter-spacing: -.1px; }
    .back { height: 140px; border-top: 2px solid rgba(0, 0, 0, .03); box-sizing: border-box; font-size: 50px; line-height: 142px; text-align: center; letter-spacing: .5px; color: rgba(40, 80, 170, .12); }
  `;

  private months = [
    { cls: "jul", name: "JUL", n: 386, h: 83 },
    { cls: "aug", name: "AUG", n: 341, h: 74 },
    { cls: "sep", name: "SEP", n: 298, h: 64 },
  ];

  private split(a: string, b: string, extra: unknown = "") {
    return html`<div class="split">${heartIcon(28, 28)}<span>${a}</span><div class="fl">${flameIcon(19, 28)}</div><span>${b}</span>${extra}</div>`;
  }

  render() {
    return html`
      <status-bar></status-bar>
      <div class="header">
        <svg class="bell" width="46" height="52" viewBox="0 0 46 52" fill="none" stroke="#6a1313" stroke-width="2.200">
          <path d="M1.200 45.500 V39 Q7 34 7 27 V19 C7 9 14 4.500 23 4.500 C32 4.500 39 9 39 19 V27 Q39 34 44.800 39 V45.500Z"></path>
          <path d="M19 4.500 Q23 -2 27 4.500Z M16 46.500 Q17.500 51 23 51 Q28.500 51 30 46.500Z" fill="#6a1313" stroke="none"></path>
          <path d="M0 45 H46" stroke-width="3"></path>
        </svg>
        <div class="brand">Dashboard</div>
        <div class="actions">
          <svg width="59" height="80" viewBox="245 285 177 239">
            <path d="M333 329 A76 76 0 0 1 401 443 M333 481 A76 76 0 0 1 265 367" fill="none" stroke="#000" stroke-width="21"></path>
            <path d="M333 285 V372 L289 327Z M333 438 V525 L376 481Z"></path>
          </svg>
          <svg width="52" height="38" viewBox="0 0 52 38" fill="#651313"><rect y="1" width="52" height="6"></rect><rect y="16" width="52" height="6"></rect><rect y="31" width="52" height="6"></rect></svg>
        </div>
      </div>
      <div class="tabs"><div class="tab">Public Education</div><div class="tab">Publications</div><div class="tab">E-services</div></div>

      <div class="row first">
        <div class="stat">
          <div class="label">REGISTERED<br />RESPONDERS</div>
          <div class="big">122058</div>
          ${this.split("3698", "3025", html`<svg class="info" width="28" height="28" viewBox="0 0 28 28"><circle cx="14" cy="14" r="14" fill="#4a4a4a"></circle><circle cx="15.800" cy="6.200" r="2.300" fill="#c8c8c8"></circle><path d="M10.500 11.500 H15.500 L13 22.500 H16.500" fill="none" stroke="#c0c0c0" stroke-width="2.800"></path></svg>`)}
        </div>
        <div class="bar"></div>
        <div class="stat">
          <div class="label">RESPONSES<br />TO CASES</div>
          <div class="big">79262</div>
          ${this.split("54188", "25074")}
        </div>
      </div>
      <div class="rule"></div>
      <div class="row second">
        <div class="stat">
          <div class="label">CASES IN OCT</div>
          <div class="big">167</div>
          ${this.split("131", "36")}
        </div>
        <div class="bar"></div>
        <div class="chart">
          <div class="modes">${heartIcon(45, 44)}${flameIcon(37, 52, "gray")}</div>
          <svg width="349" height="20" viewBox="0 0 349 20" fill="none" stroke="#a8453f" stroke-width="2.600"><path d="M7 1.500 H55 L68 16.500 L82 1.500 H325"></path></svg>
          <div class="bars">
            ${this.months.map((m) => html`
              <div class="col ${m.cls}">
                <div class="tip">${m.n}</div><div class="arrow"></div>
                <div class="block" style="height:${m.h}px"></div>
              </div>`)}
          </div>
          <div class="names">
            ${this.months.map((m) => html`<div class="col ${m.cls}"><div class="month">${m.name}</div></div>`)}
          </div>
        </div>
      </div>

      <case-map></case-map>

      <div class="nav">
        <svg width="92" height="79" viewBox="183 272 267 236" preserveAspectRatio="none"><path fill="#700000" d="M316 272 L450 398 H411 V508 H343 V425 H289 V508 H222 V398 H183Z"></path></svg>
        <svg width="84" height="92" viewBox="822 253 243 274" preserveAspectRatio="none">
          <path fill="#4a4a4a" d="M846 280 H907 A38 38 0 0 1 980 280 H1041 Q1065 280 1065 304 V503 Q1065 527 1041 527 H846 Q822 527 822 503 V304 Q822 280 846 280Z"></path>
          <g fill="#bbb"><circle cx="943" cy="294" r="14"></circle><circle cx="944" cy="381" r="50"></circle><rect x="875" y="452" width="137" height="16"></rect><rect x="875" y="481" width="97" height="16"></rect></g>
          <path d="M943 349V411M911 380H974" stroke="#4a4a4a" stroke-width="17"></path>
        </svg>
        <span></span>
        <svg width="106" height="84" viewBox="473 264 308 251" preserveAspectRatio="none">
          <path fill="#4a4a4a" d="M586 264 H669 L692 307 H748 Q781 307 781 340 V483 Q781 515 748 515 H506 Q473 515 473 483 V340 Q473 307 506 307 H561Z"></path>
          <circle cx="628" cy="411" r="75" fill="none" stroke="#bbb" stroke-width="13"></circle><circle cx="628" cy="411" r="39" fill="#bbb"></circle><circle cx="736" cy="350" r="11" fill="#bbb"></circle>
        </svg>
        <svg width="83" height="91" viewBox="0 0 83 91">
          <rect width="83" height="91" fill="#4a4a4a"></rect>
          <text class="aed" x="18" y="21" textLength="53" fill="#bbb">AED</text>
          <path fill="#bbb" d="M42 88 L20 66 C8 54 8 43 14 37 C22 29 37 31 42 42 C47 31 62 29 70 37 C76 43 76 54 64 66Z"></path>
          <path fill="#4a4a4a" d="M35 45 L43 44 L42 52 L44 58 L42 64 L44 70 L43 75 L42 84 L39 74 L40 68 L37 61 L38 54Z"></path>
        </svg>
        <svg class="call" width="182" height="182" viewBox="0 0 182 182">
          <circle cx="91" cy="91" r="91" fill="#bbb"></circle>
          <path d="M17.500 38 A90.500 90.500 0 0 1 164.500 38" fill="none" stroke="#77797b" stroke-width="1.200"></path>
          <circle cx="91" cy="91" r="79.500" fill="#4c7a28"></circle><circle cx="91" cy="91" r="71.500" fill="#244c00"></circle>
          <path fill="#bbb" transform="translate(29.500 59) scale(3.430 3.450)" d="M6.620 10.790c1.440 2.830 3.760 5.140 6.590 6.590l2.200-2.200c.27-.27.67-.36 1.020-.24 1.120.37 2.330.57 3.570.57.55 0 1 .45 1 1V20c0 .55-.45 1-1 1-9.390 0-17-7.610-17-17 0-.55.45-1 1-1h3.500c.55 0 1 .45 1 1 0 1.250.2 2.450.57 3.570.11.35.03.74-.25 1.020l-2.200 2.200z"></path>
          <text class="digits" x="71" y="101.500" fill="#bbb" stroke="#bbb" stroke-width=".6" textLength="72">995</text>
        </svg>
      </div>
      <div class="system">
        <svg width="30" height="28" viewBox="0 0 30 28" stroke="#8c8c8c" stroke-width="2.600" stroke-linecap="round"><path d="M1.300 2H28.700M1.300 14H28.700M1.300 26H28.700"></path></svg>
        <svg class="home" width="32" height="32" viewBox="0 0 32 32"><rect x="1.500" y="1.500" width="29" height="29" rx="6" fill="none" stroke="#8c8c8c" stroke-width="2.600"></rect></svg>
        <svg width="18" height="32" viewBox="0 0 18 32" fill="none" stroke="#8c8c8c" stroke-width="2.600" stroke-linecap="round"><path d="M16.500 1.500 L1.500 16 L16.500 30.500"></path></svg>
      </div>

      <div class="sheet">
        <div class="head">ANNOUNCEMENT</div>
        <div class="note">No notifications currently.</div>
        <div class="back">BACK</div>
      </div>`;
  }
}
